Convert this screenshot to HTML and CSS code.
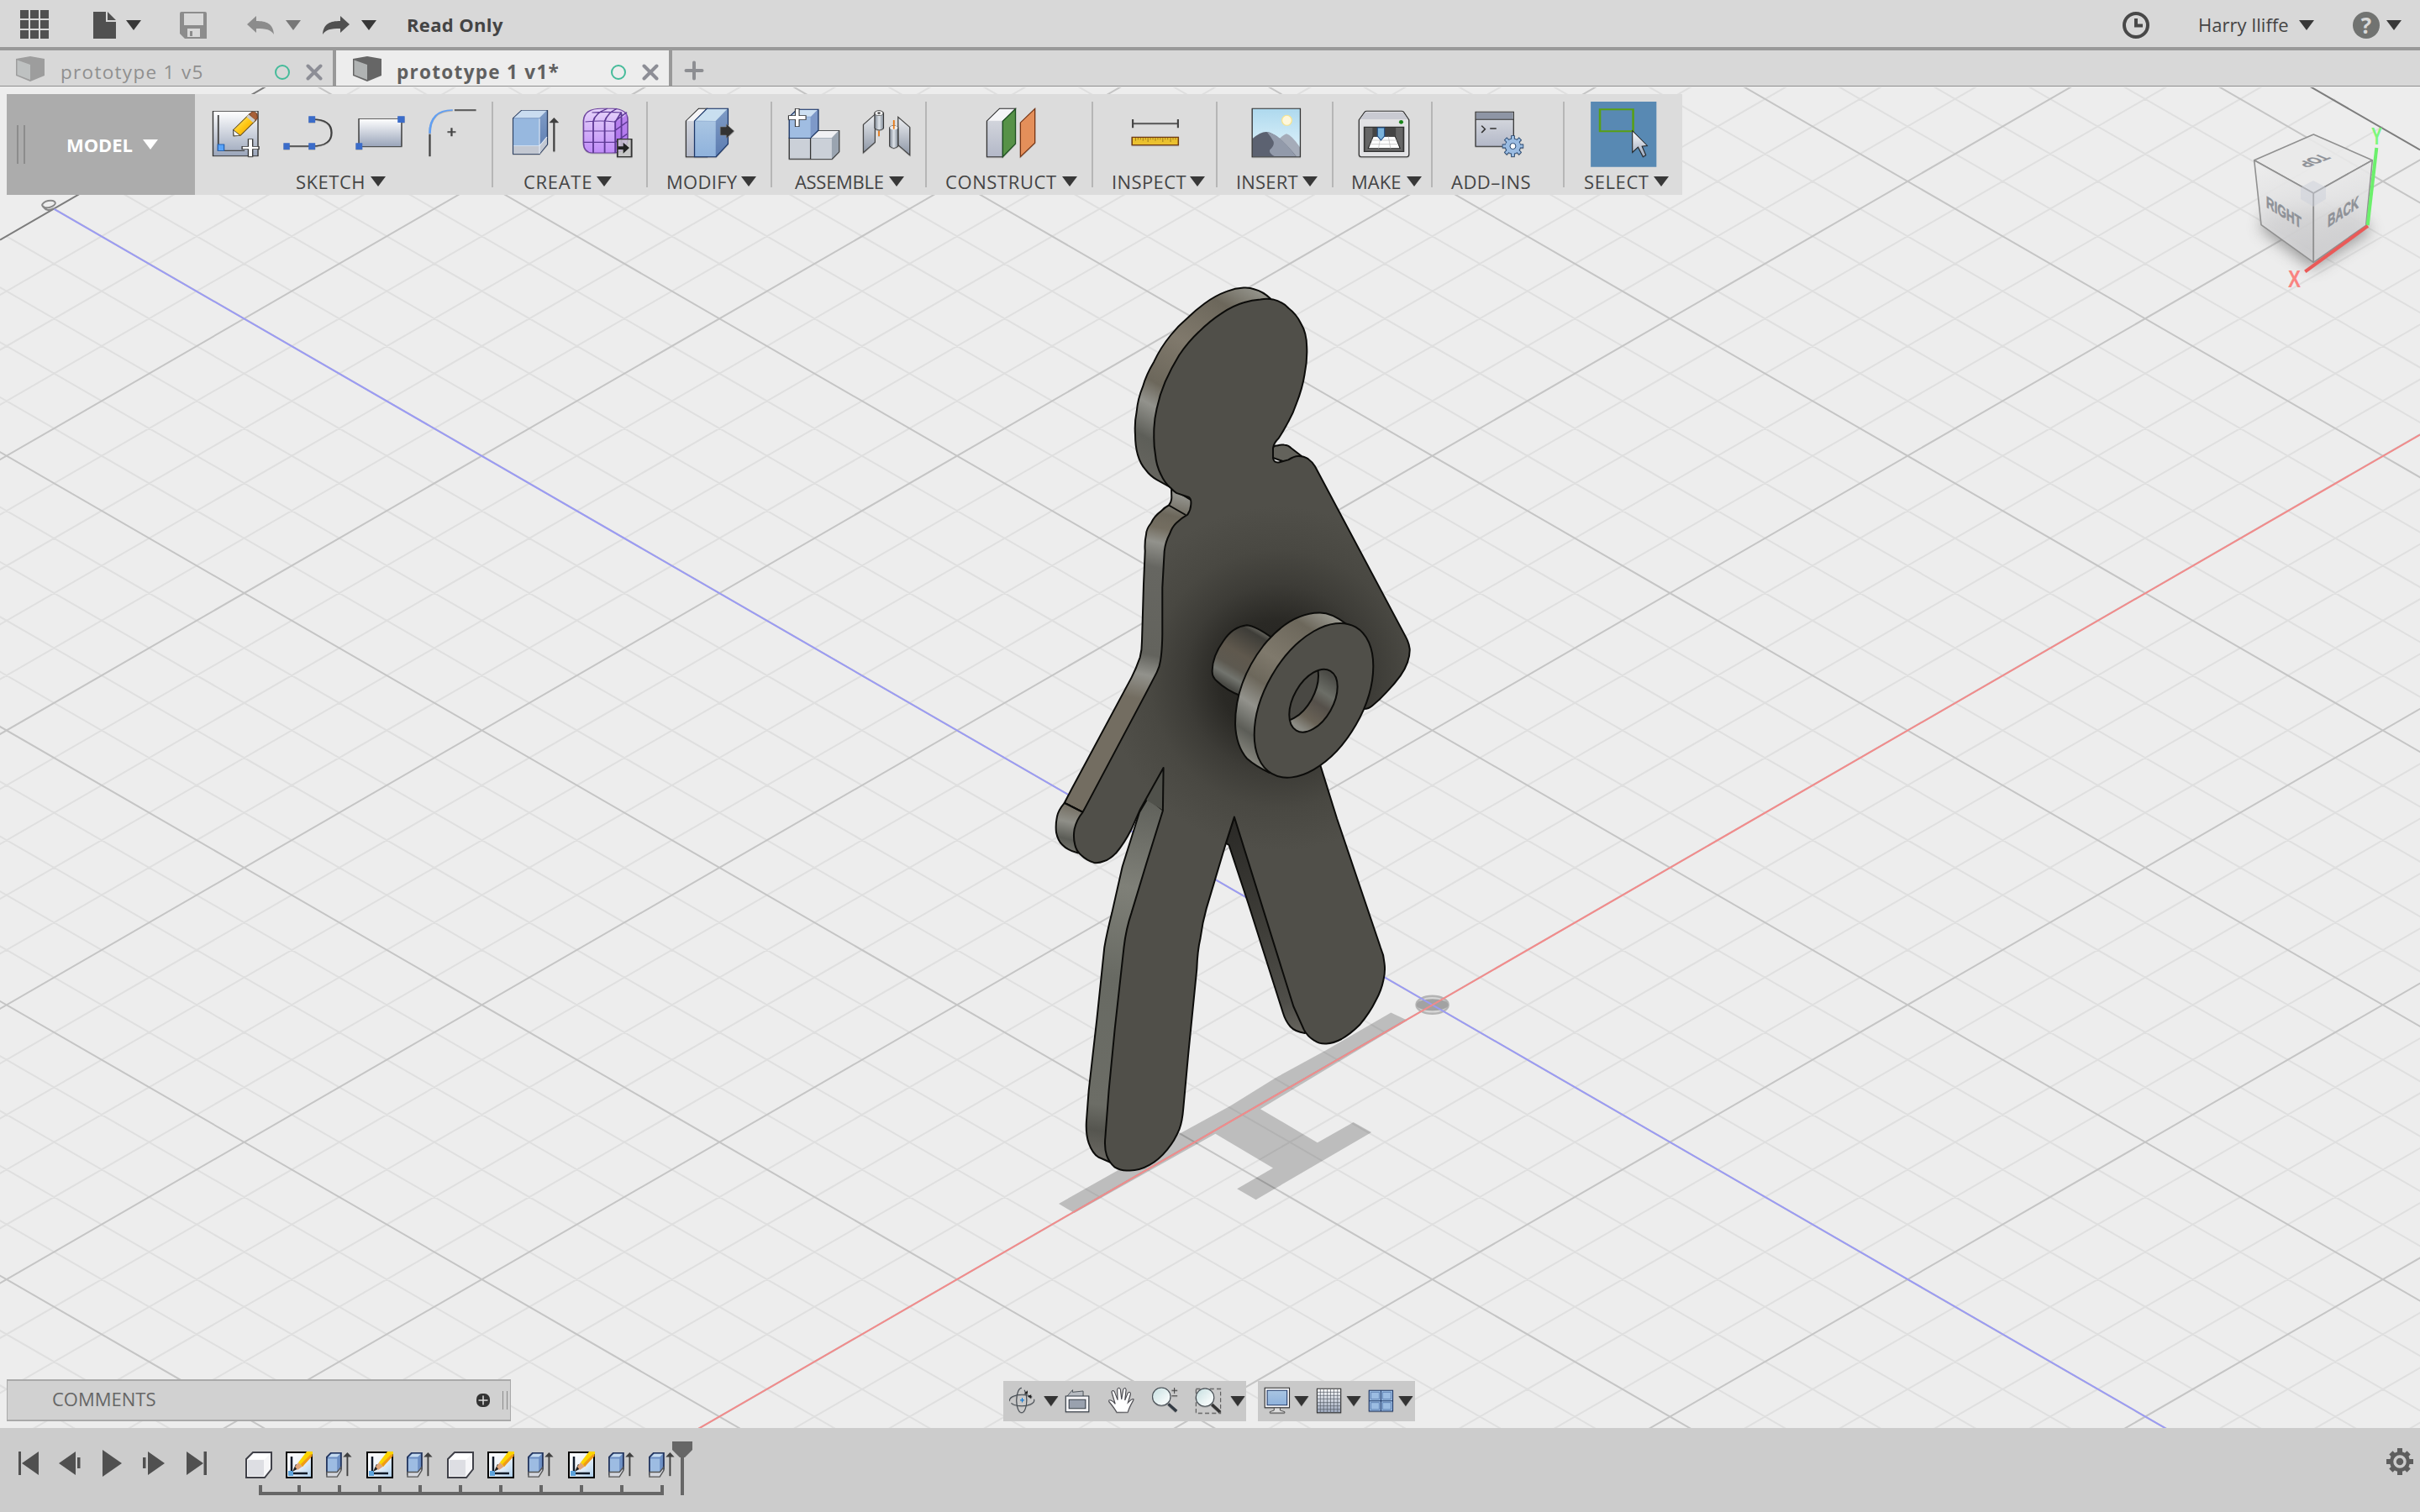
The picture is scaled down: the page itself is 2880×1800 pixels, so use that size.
FILE: index.html
```html
<!DOCTYPE html>
<html lang="en">
<head>
<meta charset="utf-8">
<title>prototype 1 v1*</title>
<link rel="stylesheet" href="styles.css">
</head>
<body>
<svg class="defs" width="0" height="0" aria-hidden="true">
  <defs>
    <linearGradient id="gPaper" x1="0" y1="0" x2="0" y2="1"><stop offset="0" stop-color="#fff"/><stop offset="1" stop-color="#9aa5ba"/></linearGradient>
    <linearGradient id="gBlue" x1="0" y1="0" x2="0" y2="1"><stop offset="0" stop-color="#a9c5e2"/><stop offset="1" stop-color="#8fb2dc"/></linearGradient>
    <linearGradient id="gGrey" x1="0" y1="0" x2="0" y2="1"><stop offset="0" stop-color="#dcdee2"/><stop offset="1" stop-color="#b3b8c8"/></linearGradient>
    <linearGradient id="gDeep" x1="0" y1="0" x2="0" y2="1"><stop offset="0" stop-color="#7f9cc6"/><stop offset="1" stop-color="#5b7bb0"/></linearGradient>
    <linearGradient id="gPencil" x1="0" y1="0" x2="1" y2="1"><stop offset="0" stop-color="#fff3a0"/><stop offset=".5" stop-color="#ffc814"/><stop offset="1" stop-color="#f08a00"/></linearGradient>
    <linearGradient id="gPurple" x1="0" y1="0" x2="0" y2="1"><stop offset="0" stop-color="#e6d4fa"/><stop offset="1" stop-color="#c08cf8"/></linearGradient>
    <linearGradient id="gSteel" x1="0" y1="0" x2="1" y2="0"><stop offset="0" stop-color="#7e8894"/><stop offset=".5" stop-color="#dfe4ea"/><stop offset="1" stop-color="#7e8894"/></linearGradient>
    <linearGradient id="gHinge" x1="0" y1="0" x2="0" y2="1"><stop offset="0" stop-color="#eef0f3"/><stop offset="1" stop-color="#8d96a5"/></linearGradient>
    <linearGradient id="gSky" x1="0" y1="0" x2="0" y2="1"><stop offset="0" stop-color="#aed9ee"/><stop offset="1" stop-color="#e4f5fc"/></linearGradient>
    <linearGradient id="gGlass" x1="0" y1="0" x2="1" y2="1"><stop offset="0" stop-color="#c4dedf"/><stop offset=".7" stop-color="#f2f8f8"/></linearGradient>
    <linearGradient id="gMini" x1="0" y1="0" x2="1" y2="1"><stop offset="0" stop-color="#fff"/><stop offset=".5" stop-color="#eef3f9"/><stop offset="1" stop-color="#a9cdec"/></linearGradient>
    <symbol id="feature" viewBox="0 0 32 32">
      <path d="M1 9L9 1h22v20L23 31H1z" fill="#f6f6f8" stroke="#3f4048" stroke-width="2"/>
      <path d="M3 10h19v19H3z" fill="#dddee3"/><path d="M3 9.500L10 3h19l-6 6.500z" fill="#fff"/>
    </symbol>
    <symbol id="sketch" viewBox="0 0 32 32">
      <path d="M1 1h30v30H1z" fill="url(#gMini)" stroke="#000" stroke-width="2"/>
      <path d="M7 6v20h19" fill="none" stroke="#101a28" stroke-width="2.500"/>
      <path d="M3 23h6v6H3z" fill="#5da3dc"/>
      <path d="M8 24l4-9 5 4z" fill="#222"/><path d="M11 18l4-5 6 4-7 5z" fill="#e0a578"/>
      <path d="M15 13L25 0h7v3L20 18z" fill="#fbd400"/><path d="M18 15L30 3l2 2L20 18z" fill="#ef9a1a"/>
    </symbol>
    <symbol id="extrude" viewBox="0 0 34 32">
      <path d="M1 6l5-5h13v20l-5 7H1z" fill="#6d8fc4" stroke="#24365f" stroke-width="2"/>
      <path d="M2 8h12v17H2z" fill="#9dbce2"/><path d="M3 6l4-4h11l-4 4z" fill="#c5dbf0"/>
      <path d="M1 25h13l5-6v4l-5 8H1z" fill="#d4d7de" stroke="#555" stroke-width="1.500"/>
      <path d="M27 4v26" stroke="#404040" stroke-width="2"/><path d="M21.500 6L27 0l5.500 6z" fill="#404040"/>
    </symbol>
    <symbol id="partcube" viewBox="0 0 34 30">
      <path d="M17 0l17 3v20L17 30 0 23V3z" fill="currentColor"/>
      <path d="M1.500 4.500L17 10v18L1.500 22z" fill="#c9cdcd" opacity=".75"/>
    </symbol>
    <symbol id="close" viewBox="0 0 20 20"><path d="M2.500 2.500l15 15M17.500 2.500l-15 15" stroke="#8d8e96" stroke-width="4" stroke-linecap="round"/></symbol>
  </defs>
</svg>

<div class="app">
  <header class="topbar">
    <svg class="apps" viewBox="0 0 34 34"><path fill="#505050" d="M0 0h10v10H0zM12 0h10v10H12zM24 0h10v10H24zM0 12h10v10H0zM12 12h10v10H12zM24 12h10v10H24zM0 24h10v10H0zM12 24h10v10H12zM24 24h10v10H24z"/></svg>
    <svg class="file" viewBox="0 0 28 32"><path fill="#505050" d="M0 0h15v12h12v20H0zM17 0l10 10H17z"/></svg>
    <i class="tri"></i>
    <svg class="save" viewBox="0 0 32 32"><path fill="#8c8c8c" fill-rule="evenodd" d="M0 2q0-2 2-2h28q2 0 2 2v30H6l-6-6zM5 2v14h23V2zM9 20v10h15V20zM12 23h3v6h-3z"/></svg>
    <svg class="undo" viewBox="0 0 32 22"><path fill="#8c8c8c" d="M0 10L11 0v6c12 0 20 3 21 16-4-6-9-7-21-7v5z"/></svg>
    <i class="tri dim"></i>
    <svg class="redo" viewBox="0 0 32 22"><path fill="#505050" d="M32 10L21 0v6C9 6 1 9 0 22c4-6 9-7 21-7v5z"/></svg>
    <i class="tri"></i>
    <strong class="mode">Read Only</strong>
    <svg class="clock" viewBox="0 0 32 32"><circle cx="16" cy="16" r="14" fill="none" stroke="#484848" stroke-width="4"/><path d="M16 8v8.500h8" fill="none" stroke="#484848" stroke-width="4"/></svg>
    <span class="user">Harry Iliffe</span>
    <i class="tri"></i>
    <span class="help">?</span>
    <i class="tri"></i>
  </header>

  <nav class="tabs">
    <div class="tab">
      <svg class="cube idle"><use href="#partcube"/></svg>
      <span class="tab-name">prototype 1 v5</span><i class="status"></i><svg class="x"><use href="#close"/></svg>
    </div>
    <div class="tab active">
      <svg class="cube"><use href="#partcube"/></svg>
      <span class="tab-name">prototype 1 v1*</span><i class="status"></i><svg class="x"><use href="#close"/></svg>
    </div>
    <svg class="plus" viewBox="0 0 24 24"><path d="M12 2.500v19M2.500 12h19" stroke="#8d8e92" stroke-width="4" stroke-linecap="round"/></svg>
  </nav>

  <main class="viewport">
    <svg class="scene" viewBox="0 104 2880 1596">
      <defs>
        <radialGradient id="occ" gradientUnits="userSpaceOnUse" cx="1522" cy="808" r="205">
          <stop offset="0" stop-color="#22211e"/><stop offset=".34" stop-color="#2a2925"/><stop offset=".55" stop-color="#3d3c37"/><stop offset=".75" stop-color="#494842"/><stop offset="1" stop-color="#504f49"/>
        </radialGradient>
        <linearGradient id="rim" gradientUnits="userSpaceOnUse" x1="1500" y1="345" x2="1360" y2="590">
          <stop offset="0" stop-color="#96968e"/><stop offset=".13" stop-color="#6c675b"/><stop offset=".35" stop-color="#80796c"/><stop offset=".56" stop-color="#6c675b"/><stop offset=".65" stop-color="#92928c"/><stop offset=".78" stop-color="#5d5e58"/><stop offset="1" stop-color="#6b6963"/>
        </linearGradient>
        <linearGradient id="flank" gradientUnits="userSpaceOnUse" x1="1400" y1="590" x2="1347" y2="830">
          <stop offset="0" stop-color="#92928c"/><stop offset=".1" stop-color="#6c675b"/><stop offset=".17" stop-color="#746e61"/><stop offset=".24" stop-color="#92928c"/><stop offset=".36" stop-color="#666661"/><stop offset=".78" stop-color="#63635d"/><stop offset=".88" stop-color="#92928c"/><stop offset="1" stop-color="#736d61"/>
        </linearGradient>
        <linearGradient id="hand" gradientUnits="userSpaceOnUse" x1="1275" y1="958" x2="1262" y2="1015">
          <stop offset="0" stop-color="#736d61"/><stop offset=".35" stop-color="#8f8f88"/><stop offset=".7" stop-color="#5b5c56"/><stop offset="1" stop-color="#77766f"/>
        </linearGradient>
        <linearGradient id="shin" gradientUnits="userSpaceOnUse" x1="1370" y1="950" x2="1300" y2="1380">
          <stop offset="0" stop-color="#5f605a"/><stop offset=".25" stop-color="#7f8078"/><stop offset=".5" stop-color="#686a63"/><stop offset=".85" stop-color="#6c6d66"/><stop offset=".92" stop-color="#55554f"/><stop offset="1" stop-color="#6b6963"/>
        </linearGradient>
        <linearGradient id="thigh" gradientUnits="userSpaceOnUse" x1="1465" y1="980" x2="1545" y2="1230">
          <stop offset="0" stop-color="#2b2a27"/><stop offset=".5" stop-color="#3f3e39"/><stop offset=".85" stop-color="#4f4e49"/><stop offset="1" stop-color="#66645d"/>
        </linearGradient>
        <linearGradient id="washer" gradientUnits="userSpaceOnUse" x1="1600" y1="735" x2="1480" y2="915">
          <stop offset="0" stop-color="#a3a39b"/><stop offset=".16" stop-color="#6c675b"/><stop offset=".4" stop-color="#7f796c"/><stop offset=".55" stop-color="#6c675b"/><stop offset=".68" stop-color="#92928c"/><stop offset=".82" stop-color="#5c5d57"/><stop offset="1" stop-color="#99988f"/>
        </linearGradient>
        <linearGradient id="hub" gradientUnits="userSpaceOnUse" x1="1503" y1="748" x2="1458" y2="824">
          <stop offset="0" stop-color="#7b7a72"/><stop offset=".12" stop-color="#3e3d38"/><stop offset=".45" stop-color="#5f584d"/><stop offset=".65" stop-color="#5d5950"/><stop offset=".78" stop-color="#72746e"/><stop offset=".92" stop-color="#484843"/><stop offset="1" stop-color="#66655e"/>
        </linearGradient>
        <linearGradient id="bore" gradientUnits="userSpaceOnUse" x1="1585" y1="805" x2="1545" y2="865">
          <stop offset="0" stop-color="#4b4b46"/><stop offset=".3" stop-color="#6c6e67"/><stop offset=".5" stop-color="#55504a"/><stop offset=".8" stop-color="#696256"/><stop offset="1" stop-color="#8b8b84"/>
        </linearGradient>
        <linearGradient id="vcL" x1="0" y1="0" x2=".2" y2="1"><stop offset="0" stop-color="#eee"/><stop offset="1" stop-color="#d3d3d5"/></linearGradient>
        <filter id="soft" x="-50%" y="-50%" width="200%" height="200%"><feGaussianBlur stdDeviation="9"/></filter>
        <clipPath id="boreClip"><circle r="1" transform="matrix(28.700 -16.600 0 33.500 1563 834.200)"/></clipPath>
      </defs>
      <path id="minor" class="grid-minor"/>
      <path id="major" class="grid-major"/>
      <path class="grid-edge" d="M0 285.600L64.400 248.400 325 98M2735 94.800L2880 178.500"/>
      <g class="corner-mark"><ellipse cx="58" cy="243" rx="8" ry="4" transform="rotate(-12 58 243)"/><path d="M51 245q4 8 13 3"/></g>
      <g transform="translate(1200 880) scale(.35714 .3699)" fill="#000" fill-opacity=".2">
        <path d="M168 1495L370 1385 570 1270 740 1180 890 1090 1060 1000 1275 880 1330 905 840 1190 1030 1298 1150 1233 1210 1265 825 1482 762 1447 882 1380 690 1270 220 1525z"/>
      </g>
      <ellipse cx="1704.600" cy="1196.300" rx="19" ry="10.500" fill="#d6d6d6" stroke="#b4b4b4" stroke-width="2.500"/>
      <ellipse cx="1704.600" cy="1196.300" rx="19" ry="7" fill="#a2a2a2"/>
      <path class="axis-z" d="M64.400 248.900L2580 1701.900"/>
      <path class="axis-x" d="M830 1701.500L2880 517.500"/>

      <g class="solid">
        <path fill="url(#thigh)" d="M1468.900 972.500L1458.900 1003.900 1462.500 1005.800 1485.700 1076 1526.800 1205.500Q1530 1216 1535.700 1222.200 1541 1228 1553 1230L1560 1200 1500 1050z"/>
        <path fill="url(#shin)" d="M1384.600 914V965L1366 950 1356 967 1335.700 1031.700 1323.200 1087.100Q1317 1112 1314.300 1127.800L1305.400 1212.900 1295.700 1298 1292.900 1335Q1292 1350 1295.700 1360.900 1300 1373 1307.100 1377.500L1322 1384 1345 1300 1400 1000z"/>
        <path fill="#50514b" stroke="none" d="M1384.500 914V965L1380 962 1362 951z"/>
        <path fill="url(#flank)" d="M1394 581L1394.300 592.800Q1394 598 1391 601.500 1386 604 1381.700 608.600 1374 614 1370 622.500 1364 630 1364 636.300 1362 645 1362.700 656L1361 695.600 1359 762.900Q1359 774 1356.700 782.600 1352 796 1346.700 806.400L1275 940 1266.800 955.800 1288.600 966.900 1400 800V640L1425 600z"/>
        <path fill="url(#hand)" d="M1266.800 955.800Q1259 965 1257.900 972.500 1256 982 1257 991 1259 1001 1264.300 1005.800 1270 1012 1283 1015.500L1300 980 1288.600 966.900z"/>
        <path fill="url(#rim)" d="M1512 355.500Q1503 347 1493.300 344.500 1487 342 1480 342.500 1470 343 1460 346.900 1446 352 1433.300 361.500 1423 369 1413.300 378.500 1402 388 1393.300 399 1381 414 1373.300 430.700 1364 446 1360 460.400 1354 475 1352.700 490 1350 503 1351 517.700 1351 531 1354 541.400 1357 552 1363.300 559.200 1369 567 1376.700 571.100L1394.300 581 1440 540 1500 400z"/>
        <path fill="#63625b" d="M1515 545L1512 536Q1516 530 1520 530.500 1525 529 1528.300 529.600 1533 530 1536.700 533.500L1549 543 1535 552z"/>
        <path fill="url(#occ)" d="M1515 356.400Q1526 359 1533.300 366.700 1543 374 1548.300 385.200 1555 396 1555.200 413 1556 429 1552.500 446 1550 462 1543 480 1539 492 1533.300 501.900 1528 512 1521.700 521.700 1516 527 1515 533.500V545.400Q1516 551 1521.700 550.500L1533.300 547.400Q1540 543 1545 543 1552 543 1556.700 546.200 1562 550 1565 555.300L1673.300 758.900Q1677 766 1677.700 772.700 1678 780 1675 788.600 1672 797 1666.700 804.400 1659 815 1650 824.100 1642 833 1633.300 840 1629 844 1622.700 843.900L1570 880 1571.400 911.400 1591 974.300 1642.900 1127.800Q1647 1137 1647.500 1146.300 1649 1156 1646.400 1166.700 1644 1179 1637.500 1190.700 1630 1206 1617.900 1220.300 1607 1231 1596.400 1237 1587 1242 1578.600 1242.500 1570 1243 1564.300 1238.800 1556 1234 1551.800 1225.900L1539.300 1198 1468.900 972.500 1458.900 1003.900 1435.700 1081.600Q1431 1098 1428.600 1116.700 1425 1132 1424.300 1153.700L1414.300 1253.600 1408.200 1320.200Q1407 1335 1403.600 1344.200 1398 1358 1389.300 1368.300 1379 1381 1367.900 1386.800 1355 1394 1342.900 1393.400 1334 1394 1326.800 1389.700 1320 1384 1317.100 1375.700 1314 1366 1315.400 1353.500L1319.600 1298 1326.800 1224 1337.500 1127.800Q1340 1106 1346.400 1087.100L1364.300 1028 1383.900 965 1384.600 914 1357.100 963.200 1346.400 987.300Q1338 1004 1328.600 1015 1321 1023 1314.300 1025 1307 1028 1301.800 1026.900 1293 1024 1287.500 1018.700 1281 1014 1279.300 1005.800 1277 997 1278.600 987.300 1281 976 1288.600 966.900L1363.300 826.100 1376.700 800.400Q1380 794 1381 786.600 1383 775 1383.300 755V699.600L1385.700 656.100Q1387 645 1391.700 636.300 1395 627 1400 622.500 1407 616 1413.300 612.600 1417 607 1417.300 600.700 1418 594 1415 592L1400 586.900Q1397 585 1393.300 581 1386 575 1381.700 565.200 1376 554 1375 541.400 1373 530 1373.300 517.700 1373 502 1376.700 486.100 1380 470 1386.700 454.400 1394 438 1403.300 422.800 1414 407 1426.700 395.100 1440 382 1453.300 373.400 1467 364 1480 360.300 1490 357 1500 356.400 1508 355 1515 356.400z"/>
        <path fill="none" d="M1266.800 955.800L1288.600 966.900M1391 601.500L1411 613"/>
        <path fill="url(#hub)" d="M1513.300 758.900Q1494 745 1484 744.200 1467 746 1456 763 1443 781 1442.700 798 1442 806 1448.300 811 1460 822 1477 828.500L1530 850 1560 780z"/>
        <path fill="url(#washer)" d="M1601.700 742.500Q1584 729 1570 729.500 1535 730 1504 768 1470 812 1470 862 1471 888 1484 903 1494 912 1511 920L1560 860 1600 780z"/>
        <circle class="flat" r="1" fill="#504f49" transform="matrix(70.8 -40.900 0 82.300 1563.500 833.800)"/>
        <g clip-path="url(#boreClip)">
          <path stroke="none" fill="url(#bore)" d="M1530 790h70v90h-70z"/>
          <circle class="flat" r="1" fill="#494843" transform="matrix(28.700 -16.600 0 33.500 1540.300 821.200)"/>
        </g>
        <circle class="flat" r="1" fill="none" transform="matrix(28.700 -16.600 0 33.500 1563 834.200)"/>
      </g>

      <g class="viewcube">
        <path d="M2690 272L2753 320 2822 275 2800 250H2700z" fill="#555" opacity=".55" stroke="none" filter="url(#soft)"/>
        <path class="face" fill="#e9e9e9" d="M2753.300 160L2823.300 190.700 2753.300 230 2682.700 190.700z"/>
        <path class="face" fill="url(#vcL)" d="M2682.700 190.700L2753.300 230V312.300L2691 267.700z"/>
        <path class="face" fill="url(#vcL)" d="M2823.300 190.700L2753.300 230V312.300L2815.700 268.300z"/>
        <path d="M2738 223l15-8 15 8v14l-15 9-15-9z" fill="#ccd0da" opacity=".5" stroke="none"/>
        <text class="vc-text" transform="matrix(.86 .53 .02 1.080 2697 246.500)" textLength="49" lengthAdjust="spacingAndGlyphs">RIGHT</text>
        <text class="vc-text" transform="matrix(.86 -.56 -.02 1.150 2770 271)" textLength="43" lengthAdjust="spacingAndGlyphs">BACK</text>
        <text class="vc-text" transform="matrix(-.9 .36 -1 -.42 2762 183)" textLength="32" lengthAdjust="spacingAndGlyphs">TOP</text>
        <path d="M2828.300 176L2817.700 268.300" stroke="#6cf06c" stroke-width="4"/>
        <path d="M2818 269L2743.300 323.300" stroke="#ea5a58" stroke-width="4"/>
        <text class="axis-label" x="2822" y="172" fill="#7df77d" textLength="13" lengthAdjust="spacingAndGlyphs">Y</text>
        <text class="axis-label" x="2723" y="341.500" fill="#f98481" textLength="15" lengthAdjust="spacingAndGlyphs">X</text>
      </g>
    </svg>

    <section class="ribbon">
      <div class="workspace"><i class="grip"></i><b>MODEL</b><i class="tri white"></i></div>
      <div class="group g-sketch">
        <svg class="icons" viewBox="444 336 677 264" preserveAspectRatio="none">
          <g class="ic">
            <path d="M485 397h102v160H485z" fill="url(#gPaper)" stroke="#333"/>
            <path d="M497 411v127h60" fill="none" stroke="#444" stroke-width="3.500"/><path d="M496 516h14v22h-14z" fill="#5aa4f8" stroke="#2464b8"/>
            <path d="M531 464l36-56 16 20-36 56-15 2z" fill="url(#gPencil)" stroke="#5a4310" stroke-width="2"/><path d="M531 464l1 21 14-2z" fill="#fff" stroke="#444" stroke-width="2"/><path d="M567 408l7-9q8-1 11 9l1 14-6 10z" fill="#a86038" stroke="#6b3a20" stroke-width="2"/><path d="M561 417l5-8 15 20-5 9z" fill="#ccc"/>
            <path d="M565 497h10v26h14v10h-14v26h-10v-26h-14v-10h14z" fill="#fff" stroke="#333"/>
            <path d="M652 522h58q44 0 44-48t-44-48" fill="none" stroke="#404040" stroke-width="4"/>
            <path d="M645 511h14v23h-14zM702 511h15v23h-15zM702 415h15v23h-15z" fill="#3b6cc9"/>
            <path d="M816 424h97v99h-97z" fill="url(#gPaper)" stroke="#333" stroke-width="2.500"/><path d="M809 511h15v23h-15zM904 415h16v23h-16z" fill="#3b6cc9"/>
            <path d="M977 558v-79M1033 393h49M1017 471h19M1026.500 457v29" stroke="#444" stroke-width="4"/><path d="M977 476q0-83 52-83" fill="none" stroke="#5f9ff5" stroke-width="5"/>
          </g>
        </svg>
        <div class="label"><span>SKETCH</span><i class="tri"></i></div>
      </div>
      <div class="group g-create">
        <svg class="icons" viewBox="1121 336 351 264" preserveAspectRatio="none">
          <g class="ic">
            <path d="M1166 422l19-28h59v122l-18 34h-60z" fill="url(#gDeep)" stroke="#2b3e60" stroke-width="2.500"/>
            <path d="M1167 424h59v97h-59z" fill="#97b8df"/><path d="M1168 421l18-26h56l-16 26z" fill="#cadcf0"/><path d="M1167 521h59l17-32v26l-17 34h-59z" fill="#c3c8d2"/><path d="M1226 424v125M1167 521h59l17-32" fill="none" stroke="#e4edf8" stroke-width="2"/>
            <path d="M1259 541V430" stroke="#404040" stroke-width="4"/><path d="M1248 438l11-18 11 18z" fill="#404040"/>
            <path d="M1326 430q2-42 40-42h26q34 2 34 38v76q-4 44-36 44h-44q-20-2-20-36z" fill="url(#gPurple)" stroke="#6f45a0" stroke-width="3"/>
            <path d="M1396 434q22-12 28-30v90q-8 40-26 46z" fill="#a45fe8" opacity=".65"/>
            <path d="M1326 468h70l30-34M1326 508h72l27-30M1330 435q36-6 66 0l28-34M1345 402q30-4 68 0M1348 546V434q4-30 32-46M1374 546V434q6-30 28-46M1398 546V436l14-36M1412 530V404" fill="none" stroke="#5e3a96" stroke-width="3.500"/>
            <path d="M1403 497h32v63h-32z" fill="#ccc" fill-opacity=".8" stroke="#333" stroke-width="3.500"/><path d="M1404 523h12v-14l14 19-14 20v-14h-12z" fill="#222"/>
          </g>
        </svg>
        <div class="label"><span>CREATE</span><i class="tri"></i></div>
      </div>
      <div class="group g-modify">
        <svg class="icons" viewBox="24 36 352 264" preserveAspectRatio="none">
          <g class="ic">
            <path d="M132 132l36-44h24v172h-60z" fill="url(#gGrey)" stroke="#333" stroke-width="3"/><path d="M134 131l34-41h22l-34 43z" fill="#f5f5f7"/>
            <path d="M156 132l35-44h60v126l-34 46h-61z" fill="url(#gDeep)" stroke="#1c3768" stroke-width="3"/><path d="M158 133h58v125h-58z" fill="url(#gBlue)"/><path d="M159 131l33-41h56l-32 42z" fill="#c9dff0"/>
            <path d="M229 153h17v-10l22 25-22 26v-11h-17z" fill="#333" stroke="#888" stroke-width="1.500"/>
          </g>
        </svg>
        <div class="label"><span>MODIFY</span><i class="tri"></i></div>
      </div>
      <div class="group g-assemble">
        <svg class="icons" viewBox="376 36 436 264" preserveAspectRatio="none">
          <g class="ic">
            <path d="M484 193l22-27h59v76l-20 26h-61z" fill="#9aa4b0" stroke="#333" stroke-width="2.500"/><path d="M485 194h59v73h-59z" fill="#cbd0d8"/><path d="M487 192l20-24h55l-18 24z" fill="#f1f1f4"/>
            <path d="M424 193h60v75h-60z" fill="#cbd0d8" stroke="#333" stroke-width="3"/>
            <path d="M424 117l22-26h60v74l-22 28h-60z" fill="#7e99c8" stroke="#1c3768" stroke-width="3"/><path d="M426 118h58v74h-58z" fill="#a0bde2"/><path d="M428 116l20-23h55l-18 23z" fill="#cde0f2"/>
            <path d="M441 88h11v25h19v14h-19v25h-11v-25h-19v-14h19z" fill="#fff" stroke="#333" stroke-width="2.500"/>
            <path d="M633 145l33-37v100l-33 37z" fill="url(#gHinge)" stroke="#444" stroke-width="3"/><path d="M665 103q12-15 25 0v55q-12 14-25 0z" fill="url(#gSteel)" stroke="#333" stroke-width="2.500"/><ellipse cx="677" cy="104" rx="12" ry="9" fill="#eee" stroke="#444" stroke-width="2.500"/><circle cx="677" cy="104" r="4" fill="#555"/><path d="M677 167v19" stroke="#ee7a12" stroke-width="4"/>
            <path d="M731 118l33 36v100l-33-36z" fill="url(#gHinge)" stroke="#444" stroke-width="3"/><path d="M707 155q10-12 24 0v67q-12 14-24 0z" fill="url(#gSteel)" stroke="#333" stroke-width="2.500"/><ellipse cx="719" cy="156" rx="11" ry="7" fill="#eee"/><path d="M719 129v32" stroke="#ee7a12" stroke-width="4"/>
          </g>
        </svg>
        <div class="label"><span>ASSEMBLE</span><i class="tri"></i></div>
      </div>
      <div class="group g-construct">
        <svg class="icons" viewBox="812 36 471 264" preserveAspectRatio="none">
          <g class="ic">
            <path d="M982 132l36-44h45l-36 45v127h-45z" fill="url(#gGrey)" stroke="#333" stroke-width="3"/><path d="M985 131l33-41h41l-33 41z" fill="#f6f6f8"/>
            <path d="M1027 133l36-44v124l-36 47z" fill="#579248" stroke="#1c5020" stroke-width="3"/>
            <path d="M1077 138l41-50v122l-41 50z" fill="#e48f5a" stroke="#773413" stroke-width="3"/>
          </g>
        </svg>
        <div class="label"><span>CONSTRUCT</span><i class="tri"></i></div>
      </div>
      <div class="group g-inspect">
        <svg class="icons" viewBox="1283 36 352 264" preserveAspectRatio="none">
          <g class="ic">
            <path d="M1395 141h128M1395 126v30M1523 126v30" fill="none" stroke="#444" stroke-width="5"/>
            <path d="M1393 190h131v28h-131z" fill="#ebc12f" stroke="#713a10" stroke-width="3.500"/>
            <path d="M1403 192v11M1410 192v7M1417 192v7M1424 192v11M1431 192v7M1438 192v15M1445 192v7M1452 192v7M1459 192v11M1466 192v7M1473 192v7M1480 192v15M1487 192v7M1494 192v7M1502 192v15M1509 192v7M1516 192v7" stroke="#7a5a10" stroke-width="1.800"/>
          </g>
        </svg>
        <div class="label"><span>INSPECT</span><i class="tri"></i></div>
      </div>
      <div class="group g-insert">
        <svg class="icons" viewBox="114 36 328 264" preserveAspectRatio="none">
          <g class="ic">
            <path d="M212 88h136v172H212z" fill="url(#gSky)"/><ellipse cx="310" cy="130" rx="14" ry="18" fill="#fff8dc" stroke="#f7e48e" stroke-width="3"/>
            <path d="M285 200q14-18 24-22 14 4 38 48v32h-30z" fill="#a5acb9"/><path d="M213 195q22-24 38-24 30 0 86 88H213z" fill="#5c6271"/><path d="M254 172q34 4 82 87h-60q-18-12-14-24 14-16 10-30-8-18-18-33z" fill="#929aaa"/>
            <path d="M212 88h136v172H212z" fill="none" stroke="#333" stroke-width="3"/>
          </g>
        </svg>
        <div class="label"><span>INSERT</span><i class="tri"></i></div>
      </div>
      <div class="group g-make">
        <svg class="icons" viewBox="442 36 280 264" preserveAspectRatio="none">
          <g class="ic">
            <path d="M514 128l16-28q2-3 6-3h98q4 0 6 3l15 28v124q0 8-6 8H520q-6 0-6-8z" fill="#e2e2e4" stroke="#333" stroke-width="3"/><path d="M517 126l15-25h106l14 25z" fill="#c9cad2"/>
            <ellipse cx="633" cy="136" rx="6" ry="7" fill="#188418"/><path d="M529 154h111v87H529z" fill="#666" stroke="#333" stroke-width="4"/><path d="M552 156h66v32h-66z" fill="#444"/>
            <path d="M554 187h62l14 43h-90z" fill="#fff" stroke="#222" stroke-width="2.500"/><path d="M549 201h72M545 215h80M575 188l-6 42M597 188l6 42" stroke="#bbb" stroke-width="2"/>
            <path d="M566 156h20v30l-10 15-10-15z" fill="#7ab2da" stroke="#1d4a84" stroke-width="2.500"/>
          </g>
        </svg>
        <div class="label"><span>MAKE</span><i class="tri"></i></div>
      </div>
      <div class="group g-addins">
        <svg class="icons" viewBox="722 36 375 264" preserveAspectRatio="none">
          <g class="ic">
            <path d="M844 100h108v123H844z" fill="url(#gGrey)" stroke="#333" stroke-width="3"/><path d="M846 102h104v24H846z" fill="#8e95a5"/><path d="M844 127h108" stroke="#333" stroke-width="3"/><path d="M861 149l10 12-10 13M885 159h18" fill="none" stroke="#333" stroke-width="4"/>
            <g transform="translate(950 222) scale(2.376 3)">
              <path d="M0-12.800V12.800M-12.800 0H12.800M-9-9L9 9M9-9L-9 9" fill="none" stroke="#24456e" stroke-width="4.800"/>
              <circle r="9.600" fill="#24456e"/>
              <path d="M0-12V12M-12 0H12M-8.400-8.400L8.400 8.400M8.400-8.400L-8.400 8.400" fill="none" stroke="#9bbce2" stroke-width="3"/>
              <circle r="8.800" fill="#9bbce2"/><circle r="3.500" fill="#fff" stroke="#24456e" stroke-width="1"/>
            </g>
          </g>
        </svg>
        <div class="label"><span>ADD–INS</span></div>
      </div>
      <div class="group g-select">
        <svg class="icons" viewBox="1097 36 333 264" preserveAspectRatio="none">
          <path d="M1171 63h186v233h-186z" fill="#5889b3"/>
          <path d="M1197 91h94v78h-94z" fill="none" stroke="#58a013" stroke-width="6"/>
          <g class="ic"><path d="M1289 167l42 53-15 2 11 32-8 6-14-35-16 19z" fill="url(#gPaper)" stroke="#222" stroke-width="2.500"/></g>
        </svg>
        <div class="label"><span>SELECT</span><i class="tri"></i></div>
      </div>
    </section>

    <div class="bottom">
      <section class="comments"><span>COMMENTS</span>
        <svg class="add" viewBox="0 0 16 16"><rect width="16" height="16" rx="6.500" fill="#333"/><path d="M8 2.500v11M2.500 8h11" stroke="#ddd" stroke-width="1.500"/></svg>
        <i class="grip small"></i>
      </section>
      <svg class="navbar view" viewBox="95 72 809 144" preserveAspectRatio="none">
        <g class="ic">
          <ellipse cx="157" cy="141" rx="41" ry="20" fill="none" stroke="#444b52" stroke-width="3" stroke-dasharray="86 10"/><ellipse cx="156" cy="141" rx="17" ry="44" fill="none" stroke="#444b52" stroke-width="3" stroke-dasharray="150 12"/>
          <path d="M164 118h12v-12zM176 127l12 8V121z" fill="#222"/><path d="M158 132v16M151 140h14" stroke="#0a7de0" stroke-width="3"/>
          <path d="M230 126h48l-24 36z" fill="#333"/>
          <path d="M308 126l18-22v8l35-4v18" fill="#b8bcc2" stroke="#444b52" stroke-width="2.500"/><path d="M303 126h77v56h-77z" fill="#f4f4f6" stroke="#333b44" stroke-width="3"/><path d="M314 139h55v31h-55z" fill="#99a1ae" stroke="#333b44" stroke-width="3"/>
          <path d="M473 184q-8-16-26-39-1-10 14 1l7 8-12-43q4-10 10 1l10 28-1-38q5-10 10 0l4 36 6-36q6-9 9 1l-4 38 10-26q8-7 9 3l-9 32 10-10q12-8 8 1-14 26-18 42z" fill="#fff" stroke="#4a4a50" stroke-width="3"/>
          <path d="M645 154l27 26" stroke="#333b44" stroke-width="10"/><ellipse cx="622" cy="128" rx="30" ry="32" fill="url(#gGlass)" stroke="#444b52" stroke-width="3"/><path d="M665 96v20M656 106h19M656 125h19" stroke="#444" stroke-width="2.800"/>
          <path d="M737 100h82v87h-82z" fill="none" stroke="#555" stroke-width="2.800" stroke-dasharray="14 9"/><path d="M790 156l27 27" stroke="#333" stroke-width="10"/><ellipse cx="767" cy="131" rx="30" ry="32" fill="url(#gGlass)" stroke="#444b52" stroke-width="3"/>
          <path d="M852 126h48l-24 36z" fill="#333"/>
        </g>
      </svg>
      <svg class="navbar display" viewBox="944 72 523 144" preserveAspectRatio="none">
        <g class="ic">
          <path d="M998 167h20v10l15 5v4h-49v-4l14-5z" fill="#ddd" stroke="#444" stroke-width="2.500"/><path d="M967 97h82v70h-82z" fill="#f4f4f6" stroke="#333" stroke-width="3"/><path d="M975 106h66v52h-66z" fill="url(#gBlue)" stroke="#1f3868" stroke-width="3"/>
          <path d="M1065 126h48l-24 36z" fill="#333"/>
          <path d="M1141 100h79v85h-79z" fill="url(#gPaper)" stroke="#333" stroke-width="3"/><path d="M1152 100v85M1163 100v85M1175 100v85M1186 100v85M1197 100v85M1209 100v85M1141 112h79M1141 124h79M1141 136h79M1141 149h79M1141 161h79M1141 173h79" stroke="#555c66" stroke-width="2"/>
          <path d="M1239 126h48l-24 36z" fill="#333"/>
          <path d="M1314 106h79v74h-79z" fill="#9bbce2" stroke="#1f3868" stroke-width="3"/><path d="M1353.500 106v74M1314 143h79" stroke="#1f3868" stroke-width="3"/><path d="M1320 112h28v25h-28zM1359 112h28v25h-28zM1320 149h28v25h-28zM1359 149h28v25h-28z" fill="none" stroke="#5577aa" stroke-width="2.300"/>
          <path d="M1412 126h48l-24 36z" fill="#333"/>
        </g>
      </svg>
    </div>
  </main>

  <footer class="timeline">
    <svg class="playback" viewBox="22 1726 224 32"><path fill="#505050" d="M22 1728h3v28h-3zM46 1728v28l-20-14zM90 1728v28l-20-14zM92 1735h3.500v13H92zM122 1726l23 16-23 16zM170 1735h3.500v13H170zM176 1728v28l20-14zM222 1728v28l20-14zM242.500 1728h3.500v28h-3.500z"/></svg>
    <div class="history">
      <div class="features">
        <svg><use href="#feature"/></svg><svg><use href="#sketch"/></svg><svg><use href="#extrude"/></svg><svg><use href="#sketch"/></svg><svg><use href="#extrude"/></svg><svg><use href="#feature"/></svg><svg><use href="#sketch"/></svg><svg><use href="#extrude"/></svg><svg><use href="#sketch"/></svg><svg><use href="#extrude"/></svg><svg><use href="#extrude"/></svg>
      </div>
      <svg class="track" viewBox="308 1768 482 12"><path fill="none" stroke="#666" stroke-width="4" d="M310 1768v10h478v-10M356 1768v10M404 1768v10M452 1768v10M500 1768v10M548 1768v10M596 1768v10M644 1768v10M692 1768v10M740 1768v10"/></svg>
    </div>
    <svg class="marker" viewBox="0 0 24 64"><path fill="#666" d="M0 0h24v10l-9 9h-1v45h-4V19H9l-9-9z"/></svg>
    <svg class="gear" viewBox="-16 -16 32 32"><g fill="#5e5e5e"><path d="M-3-16h6v32h-6zM-16-3h32v6h-32z"/><path d="M-3-15h6v30h-6zM-15-3h30v6h-30z" transform="rotate(45)"/><circle r="12"/></g><circle r="6" fill="#5e5e5e" stroke="#ccc" stroke-width="3.500"/></svg>
  </footer>
</div>
<script src="grid.js"></script>
</body>
</html>
```
FILE: styles.css
```css
* { box-sizing: border-box; }
body { margin: 0; background: #ededed; font-family: "Open Sans", "Noto Sans", sans-serif; font-size: 22px; color: #444; }
svg { display: block; flex: none; }
.defs { position: absolute; }
.app { width: 2880px; height: 1800px; display: flex; flex-direction: column; overflow: hidden; }

.tri { flex: none; width: 18px; height: 12px; background: #383838; clip-path: polygon(0 0, 100% 0, 50% 100%); }
.tri.dim { background: #777; }
.tri.white { background: #fff; }

.topbar { height: 60px; flex: none; padding-left: 24px; display: flex; align-items: center; background: #d8d8d8; border-bottom: 4px solid #999; }
.topbar svg, .topbar .help { margin-top: 4px; }
.topbar .tri { margin-top: 4px; }
.topbar .apps { width: 34px; height: 34px; margin-top: 2px; }
.file { width: 28px; height: 32px; margin-left: 53px; }
.file + .tri { margin-left: 11px; }
.save { width: 32px; height: 32px; margin-left: 46px; }
.undo { width: 32px; height: 22px; margin-left: 48px; }
.undo + .tri { margin-left: 14px; }
.redo { width: 32px; height: 22px; margin-left: 26px; }
.redo + .tri { margin-left: 14px; }
.mode { width: 130px; margin-left: 36px; padding-top: 1px; white-space: nowrap; font-weight: 700; letter-spacing: .35px; }
.clock { width: 32px; height: 32px; margin-left: auto; }
.user { width: 121px; margin: 1px 0 0 57px; white-space: nowrap; letter-spacing: 0; text-indent: 1px; }
.help { width: 32px; height: 32px; margin: 0 8px 0 46px; border-radius: 50%; background: #717371; color: #d8d8d8; font-weight: 700; font-size: 26px; line-height: 33px; text-align: center; }
.help + .tri { margin-right: 22px; }

.tabs { height: 43px; flex: none; display: flex; background: #d8d8d8; border-bottom: 1px solid #909090; }
.tab { width: 400px; display: flex; align-items: center; border-right: 4px solid #999; color: #8f8f8f; padding-left: 19px; }
.tab.active { background: #ededed; color: #606060; font-weight: 700; padding-left: 20px; }
.cube { width: 34px; height: 30px; color: #666; margin-top: 1px; }
.cube.idle { color: #9d9d9d; }
.tab-name { margin: 9px auto 0 19px; white-space: nowrap; font-size: 22.5px; letter-spacing: 1.3px; }
.active .tab-name { margin-left: 18px; }
.status { width: 18px; height: 18px; margin: 9px 19px 0 0; border: 2px solid #45bb9a; border-radius: 50%; }
.x { width: 20px; height: 20px; margin: 9px 12px 0 0; }
.plus { width: 24px; height: 24px; margin: 12px 0 0 14px; }

.viewport { position: relative; flex: 1; display: flex; flex-direction: column; justify-content: space-between; }
.scene { position: absolute; left: 0; top: 1px; width: 2880px; height: 1596px; }
.grid-minor, .grid-major, .grid-edge { fill: none; stroke-width: 2; }
.grid-minor { stroke: #dfdfdf; }
.grid-major { stroke: #c5c5c5; }
.grid-edge { stroke: #7d7d7d; }
.corner-mark { fill: none; stroke: #888; stroke-width: 2; }
.axis-z { stroke: #9b9bf3; stroke-width: 2; }
.axis-x { stroke: #f28b8b; stroke-width: 2; }
.solid { stroke: #0c0c0a; stroke-width: 2; stroke-linejoin: round; }
.flat { vector-effect: non-scaling-stroke; }
.viewcube { stroke: none; }
.face { stroke: #909090; stroke-width: 1.6; stroke-linejoin: round; fill-opacity: .88; }
.vc-text { font: 700 18px "Liberation Sans", sans-serif; fill: #8e9197; stroke: #8e9197; stroke-width: .5px; }
.axis-label { font: 700 29px "Liberation Sans", sans-serif; }

.ribbon { position: relative; width: 1994px; height: 120px; margin: 9px 0 0 8px; display: flex; background: #dcdcdc; }
.workspace { width: 224px; flex: none; display: flex; align-items: center; background: #acacac; color: #fff; padding-left: 12px; }
.grip { width: 10px; height: 46px; border: solid #8c8c8c; border-width: 0 2px; }
.workspace b { width: 91px; margin-left: 49px; letter-spacing: -.1px; }
.group { position: relative; flex: none; }
.group:not(:last-child)::after { content: ""; position: absolute; right: 0; top: 9px; width: 2px; height: 102px; background: #b6b6b6; }
.icons { width: 100%; height: 88px; }
.ic { filter: drop-shadow(0 2px 1px rgba(0, 0, 0, .25)); stroke-width: 2.5; }
.label { height: 32px; display: flex; align-items: center; line-height: 30px; white-space: nowrap; }
.label span { flex: none; padding-bottom: 1px; }
.g-sketch { width: 355px; } .g-sketch .label { padding-left: 120px; } .g-sketch span { width: 89px; letter-spacing: .5px; }
.g-create { width: 184px; } .g-create .label { padding-left: 36px; } .g-create span { width: 87px; letter-spacing: .7px; }
.g-modify { width: 148px; } .g-modify .label { padding-left: 22px; } .g-modify span { width: 89px; letter-spacing: .3px; }
.g-assemble { width: 184px; } .g-assemble .label { padding-left: 27px; } .g-assemble span { width: 112px; letter-spacing: -.3px; }
.g-construct { width: 198px; } .g-construct .label { padding-left: 22px; } .g-construct span { width: 139px; letter-spacing: .6px; }
.g-inspect { width: 148px; } .g-inspect .label { padding-left: 22px; } .g-inspect span { width: 93px; letter-spacing: .4px; }
.g-insert { width: 138px; } .g-insert .label { padding-left: 22px; } .g-insert span { width: 79px; letter-spacing: .2px; }
.g-make { width: 118px; } .g-make .label { padding-left: 21px; } .g-make span { width: 66px; }
.g-addins { width: 157px; } .g-addins .label { padding-left: 22px; } .g-addins span { letter-spacing: .5px; }
.g-select { width: 140px; } .g-select .label { padding-left: 23px; } .g-select span { width: 83px; letter-spacing: .6px; }

.bottom { position: relative; display: flex; height: 58px; padding-left: 8px; }
.comments { width: 600px; height: 50px; display: flex; align-items: center; background: #d1d1d1; border: 2px solid #a9a9a9; border-left-width: 1px; border-right-width: 1px; color: #666; padding-left: 53px; }
.comments span { padding-bottom: 4px; }
.add { width: 16px; height: 16px; margin-left: auto; }
.grip.small { width: 6px; height: 22px; border-width: 0 1px; margin: 0 3px 0 15px; }
.navbar { height: 48px; margin-top: 2px; background: #c9c9c9; }
.navbar.view { width: 289px; margin-left: 586px; }
.navbar.display { width: 187px; margin-left: 14px; }

.timeline { height: 100px; flex: none; display: flex; background: #ccc; padding-left: 22px; }
.playback { width: 224px; height: 32px; margin-top: 26px; }
.history { width: 508px; margin: 28px 0 0 46px; }
.features { display: flex; gap: 16px; }
.features svg { width: 32px; height: 32px; overflow: visible; }
.track { width: 482px; height: 12px; margin: 8px 0 0 16px; }
.marker { width: 24px; height: 64px; margin-top: 16px; }
.gear { width: 32px; height: 32px; margin: 24px 8px 0 auto; }
```
FILE: grid.js
```js
// Ground grid: two families of isometric lines through the origin,
// every fifth line is a major one. The plane ends at lines -29 and -26.
const ORIGIN = { x: 1704.6, y: 1196.3 };
const SLOPE = 0.5778;
const STEP = 65.36;
const EDGE_RISING = -29, EDGE_FALLING = -26;
const paths = { minor: '', major: '' };

function cross(kRising, kFalling) {
  return {
    x: ORIGIN.x + (kRising - kFalling) * STEP / (2 * SLOPE),
    y: ORIGIN.y + (kRising + kFalling) * STEP / 2
  };
}
function add(k, a, b) {
  const kind = k % 5 === 0 ? 'major' : 'minor';
  paths[kind] += `M${a.x.toFixed(1)} ${a.y.toFixed(1)}L${b.x.toFixed(1)} ${b.y.toFixed(1)}`;
}
for (let k = EDGE_RISING + 1; k < 40; k++) add(k, cross(k, EDGE_FALLING), cross(k, 45));
for (let k = EDGE_FALLING + 1; k < 40; k++) add(k, cross(EDGE_RISING, k), cross(45, k));
document.getElementById('minor').setAttribute('d', paths.minor);
document.getElementById('major').setAttribute('d', paths.major);
```
